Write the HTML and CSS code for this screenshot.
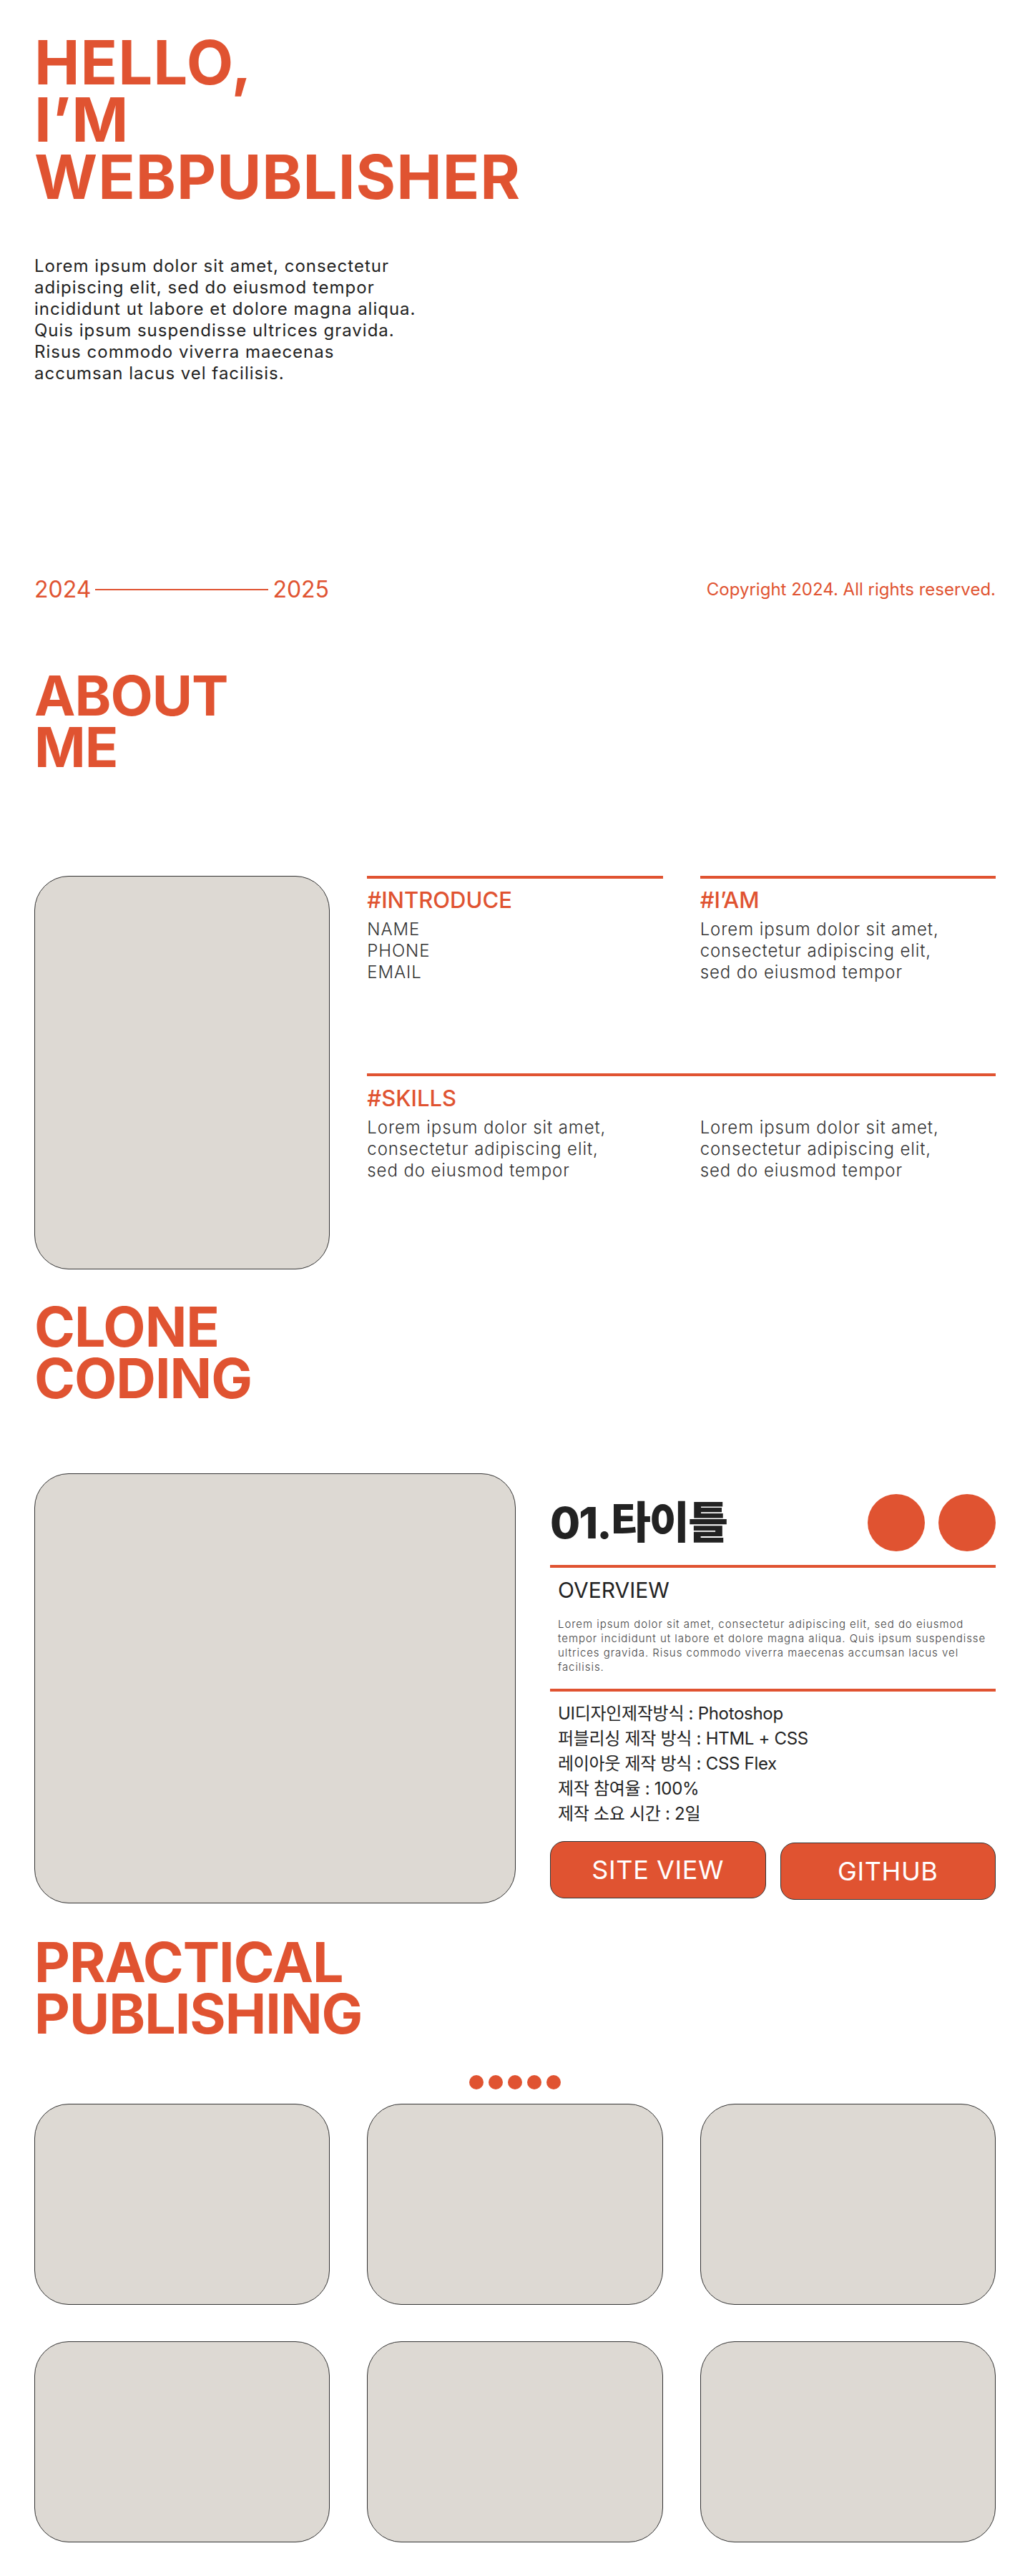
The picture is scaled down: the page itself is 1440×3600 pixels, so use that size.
FILE: index.html
```html
<!DOCTYPE html>
<html lang="ko">
<head>
<meta charset="utf-8">
<title>Web Publisher Portfolio</title>
<link rel="stylesheet" href="styles.css">
</head>
<body>
<main class="page">
  <section class="hero">
    <h1 class="hero-title">HELLO,<br>I’M<br>WEBPUBLISHER</h1>
    <p class="hero-text">Lorem ipsum dolor sit amet, consectetur<br>adipiscing elit, sed do eiusmod tempor<br>incididunt ut labore et dolore magna aliqua.<br>Quis ipsum suspendisse ultrices gravida.<br>Risus commodo viverra maecenas<br>accumsan lacus vel facilisis.</p>
    <div class="period-row">
      <div class="period"><span>2024</span><span class="period-line"></span><span>2025</span></div>
      <p class="copyright">Copyright 2024. All rights reserved.</p>
    </div>
  </section>

  <section class="about">
    <h2 class="section-title">ABOUT<br>ME</h2>
    <div class="about-grid">
      <div class="photo"></div>
      <div class="info-block">
        <h3 class="info-title">#INTRODUCE</h3>
        <ul class="info-list">
          <li>NAME</li>
          <li>PHONE</li>
          <li>EMAIL</li>
        </ul>
      </div>
      <div class="info-block">
        <h3 class="info-title">#I’AM</h3>
        <p class="info-text">Lorem ipsum dolor sit amet,<br>consectetur adipiscing elit,<br>sed do eiusmod tempor</p>
      </div>
      <div class="info-block skills">
        <h3 class="info-title">#SKILLS</h3>
        <div class="skills-cols">
          <p class="info-text">Lorem ipsum dolor sit amet,<br>consectetur adipiscing elit,<br>sed do eiusmod tempor</p>
          <p class="info-text">Lorem ipsum dolor sit amet,<br>consectetur adipiscing elit,<br>sed do eiusmod tempor</p>
        </div>
      </div>
    </div>
  </section>

  <section class="clone">
    <h2 class="section-title">CLONE<br>CODING</h2>
    <div class="clone-grid">
      <div class="clone-thumb"></div>
      <div class="clone-info">
        <div class="clone-head">
          <h3 class="clone-title">01.타이틀</h3>
          <div class="clone-dots"><span></span><span></span></div>
        </div>
        <div class="overview">
          <h4 class="overview-title">OVERVIEW</h4>
          <p class="overview-text">Lorem ipsum dolor sit amet, consectetur adipiscing elit, sed do eiusmod<br>tempor incididunt ut labore et dolore magna aliqua. Quis ipsum suspendisse<br>ultrices gravida. Risus commodo viverra maecenas accumsan lacus vel<br>facilisis.</p>
        </div>
        <ul class="spec">
          <li>UI디자인제작방식 : Photoshop</li>
          <li>퍼블리싱 제작 방식 : HTML + CSS</li>
          <li>레이아웃 제작 방식 : CSS Flex</li>
          <li>제작 참여율 : 100%</li>
          <li>제작 소요 시간 : 2일</li>
        </ul>
        <div class="btns">
          <a class="btn" href="#">SITE VIEW</a>
          <a class="btn btn-alt" href="#">GITHUB</a>
        </div>
      </div>
    </div>
  </section>

  <section class="practical">
    <h2 class="section-title">PRACTICAL<br>PUBLISHING</h2>
    <div class="pager"><span></span><span></span><span></span><span></span><span></span></div>
    <div class="card-grid">
      <div class="card"></div>
      <div class="card"></div>
      <div class="card"></div>
      <div class="card"></div>
      <div class="card"></div>
      <div class="card"></div>
    </div>
  </section>
</main>
</body>
</html>
```
FILE: styles.css
```css
* { box-sizing: border-box; }

body {
  margin: 0;
  background: #ffffff;
  color: #222222;
  font-family: "Inter", "Noto Sans CJK KR", sans-serif;
}

.page {
  padding: 48px 48px 47px;
}

/* HERO */
.hero-title {
  margin: 0;
  font-size: 85px;
  line-height: 80px;
  font-weight: 700;
  letter-spacing: 1px;
  color: #e05331;
}

.hero-text {
  margin: 69px 0 0;
  font-size: 24px;
  line-height: 30px;
  letter-spacing: 1px;
  white-space: nowrap;
  color: #222222;
}

.period-row {
  margin-top: 269px;
  height: 36px;
  display: flex;
  justify-content: space-between;
  align-items: center;
  color: #e05331;
}

.period {
  display: flex;
  align-items: center;
  gap: 6px;
  font-size: 32px;
  line-height: 36px;
}

.period-line {
  width: 242px;
  height: 2px;
  background: #e05331;
}

.copyright {
  margin: 0;
  font-size: 24px;
  line-height: 36px;
}

/* SECTION TITLES */
.section-title {
  margin: 0;
  font-size: 77px;
  line-height: 72px;
  font-weight: 700;
  letter-spacing: -1px;
  color: #e05331;
}

/* ABOUT */
.about .section-title { margin-top: 94px; }

.about-grid {
  margin-top: 144px;
  display: grid;
  grid-template-columns: repeat(3, 1fr);
  grid-template-rows: 276px auto;
  column-gap: 52px;
}

.photo {
  grid-row: 1 / span 2;
  height: 550px;
  background: #ddd9d3;
  border: 1px solid #333333;
  border-radius: 48px;
}

.info-block {
  border-top: 4px solid #e05331;
  padding-top: 12px;
}

.info-title {
  margin: 0 0 8px;
  font-size: 31px;
  line-height: 36px;
  font-weight: 500;
  color: #e05331;
}

.info-list {
  margin: 0;
  padding: 0;
  list-style: none;
}

.info-list li,
.info-text {
  font-size: 24px;
  line-height: 30px;
  font-weight: 300;
  letter-spacing: 0.9px;
  white-space: nowrap;
  color: #333333;
}

.info-text { margin: 0; }

.skills {
  grid-column: 2 / span 2;
  padding-top: 13px;
}

.skills-cols {
  display: grid;
  grid-template-columns: 1fr 1fr;
  column-gap: 52px;
}

/* CLONE CODING */
.clone .section-title { margin-top: 44px; }

.clone-grid {
  margin-top: 97px;
  display: grid;
  grid-template-columns: 673px 1fr;
  column-gap: 48px;
}

.clone-thumb {
  height: 601px;
  background: #ddd9d3;
  border: 1px solid #333333;
  border-radius: 48px;
}

.clone-info {
  padding-top: 29px;
}

.clone-head {
  display: flex;
  justify-content: space-between;
  align-items: center;
  height: 80px;
}

.clone-title {
  margin: 0;
  font-size: 61px;
  line-height: 80px;
  font-weight: 800;
  letter-spacing: -2px;
  color: #222222;
}

.clone-dots {
  display: flex;
  gap: 19px;
}

.clone-dots span {
  width: 80px;
  height: 80px;
  border-radius: 50%;
  background: #e05331;
}

.overview {
  margin-top: 19px;
  border-top: 4px solid #e05331;
  border-bottom: 4px solid #e05331;
  padding: 13px 11px 20px;
}

.overview-title {
  margin: 0;
  font-size: 30px;
  line-height: 36px;
  font-weight: 400;
  color: #222222;
}

.overview-text {
  margin: 20px 0 0;
  font-size: 15px;
  line-height: 20px;
  font-weight: 300;
  letter-spacing: 0.95px;
  white-space: nowrap;
  color: #444444;
}

.spec {
  margin: 0;
  padding: 13px 11px 0;
  list-style: none;
}

.spec li {
  font-size: 24px;
  line-height: 35px;
  letter-spacing: -0.3px;
  color: #222222;
}

.btns {
  margin-top: 21px;
  display: flex;
  gap: 20px;
}

.btn {
  flex: 1;
  height: 80px;
  display: flex;
  align-items: center;
  justify-content: center;
  background: #e05331;
  border: 1px solid #333333;
  border-radius: 20px;
  color: #ffffff;
  text-decoration: none;
  font-size: 36px;
  font-weight: 400;
  letter-spacing: 0.6px;
}

.btn-alt { margin-top: 2px; }

/* PRACTICAL */
.practical .section-title { margin-top: 46px; }

.pager {
  margin-top: 50px;
  display: flex;
  justify-content: center;
  gap: 7px;
}

.pager span {
  width: 20px;
  height: 20px;
  border-radius: 50%;
  background: #e05331;
}

.card-grid {
  margin-top: 20px;
  display: grid;
  grid-template-columns: repeat(3, 1fr);
  column-gap: 52px;
  row-gap: 51px;
}

.card {
  height: 281px;
  background: #ddd9d3;
  border: 1px solid #333333;
  border-radius: 48px;
}
```
